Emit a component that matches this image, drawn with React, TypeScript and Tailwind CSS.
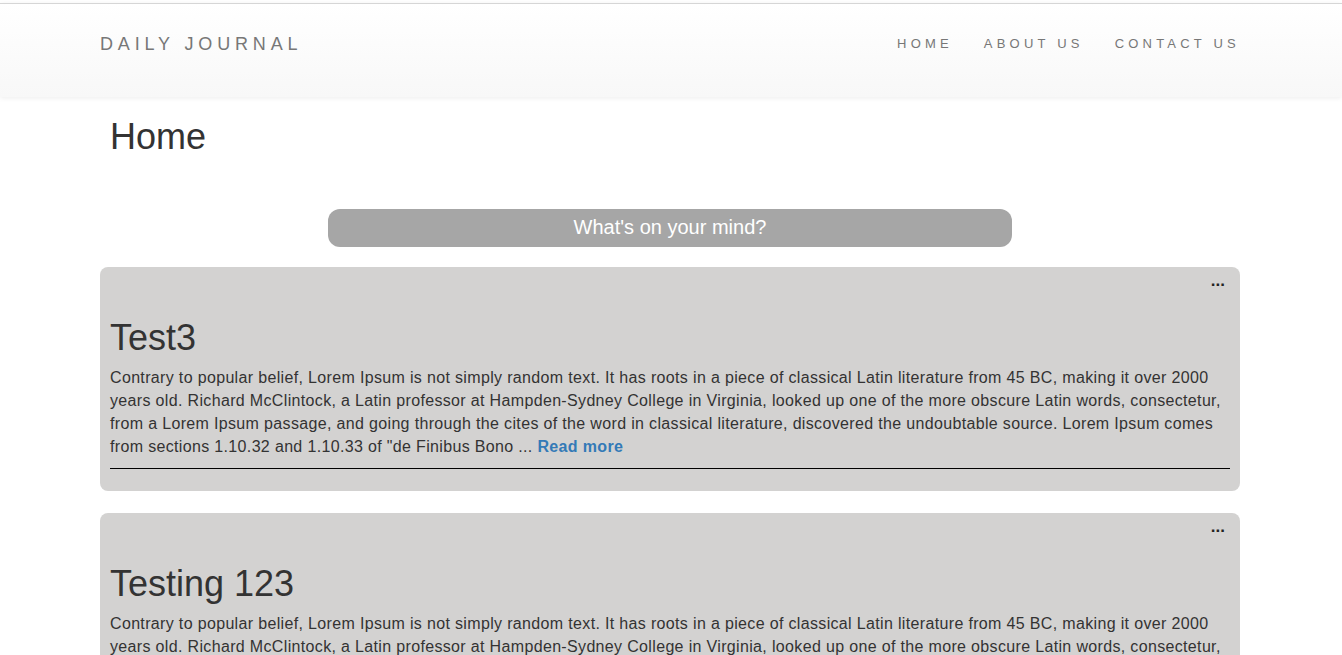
const posts = [
  {
    title: 'Test3',
    body: 'Contrary to popular belief, Lorem Ipsum is not simply random text. It has roots in a piece of classical Latin literature from 45 BC, making it over 2000 years old. Richard McClintock, a Latin professor at Hampden-Sydney College in Virginia, looked up one of the more obscure Latin words, consectetur, from a Lorem Ipsum passage, and going through the cites of the word in classical literature, discovered the undoubtable source. Lorem Ipsum comes from sections 1.10.32 and 1.10.33 of "de Finibus Bono ...',
  },
  {
    title: 'Testing 123',
    body: 'Contrary to popular belief, Lorem Ipsum is not simply random text. It has roots in a piece of classical Latin literature from 45 BC, making it over 2000 years old. Richard McClintock, a Latin professor at Hampden-Sydney College in Virginia, looked up one of the more obscure Latin words, consectetur, from a Lorem Ipsum passage, and going through the cites of the word in classical literature, discovered the undoubtable source. Lorem Ipsum comes from sections 1.10.32 and 1.10.33 of "de Finibus Bono ...',
  },
]

function Navbar() {
  return (
    <div className="mt-[3px] border-t border-[#d6d6d6] bg-gradient-to-b from-white to-[#f8f8f8] shadow-[0_1px_5px_rgba(0,0,0,0.075)]">
      <div className="ml-[100px] w-[1140px] h-[93px] pt-[30px] flex justify-between items-start">
        <a className="text-[18px] leading-[20px] tracking-[4.85px] text-[#777]">DAILY JOURNAL</a>
        <ul className="flex gap-[31px] text-[13px] leading-[20px] tracking-[4.2px] text-[#777]">
          <li>HOME</li>
          <li>ABOUT US</li>
          <li>CONTACT US</li>
        </ul>
      </div>
    </div>
  )
}

function Post({ title, body }: { title: string; body: string }) {
  return (
    <div className="rounded-lg bg-[#d3d2d1] pt-[4px] px-[10px] pb-[22px]">
      <div className="flex justify-end">
        <span className="mr-[5px] text-[17px] leading-[20px] font-bold text-[#222]">...</span>
      </div>
      <h1 className="mt-[27px] mb-[10px] text-[36px] leading-[39.6px] text-[#333]">{title}</h1>
      <p className="text-[16px] leading-[22.85px] tracking-[0.34px] text-[#333]">
        {body} <a className="font-bold text-[#337ab7]">Read more</a>
      </p>
      <hr className="mt-[9px] border-0 border-t border-black" />
    </div>
  )
}

export default function App() {
  return (
    <div className="min-h-screen bg-white font-['Liberation_Sans',Arial,sans-serif]">
      <Navbar />
      <div className="ml-[100px] w-[1140px]">
        <h1 className="mt-[20px] pl-[10px] text-[36px] leading-[39.6px] text-[#333]">Home</h1>
        <div className="mt-[52px] flex justify-center">
          <input
            className="w-[60%] h-[38px] rounded-xl bg-[#a6a6a6] text-center text-[20px] text-white placeholder:text-white outline-none"
            placeholder="What's on your mind?"
          />
        </div>
        <div className="mt-[20px] flex flex-col gap-[22px]">
          {posts.map((p, i) => (
            <Post key={i} title={p.title} body={p.body} />
          ))}
        </div>
      </div>
    </div>
  )
}
